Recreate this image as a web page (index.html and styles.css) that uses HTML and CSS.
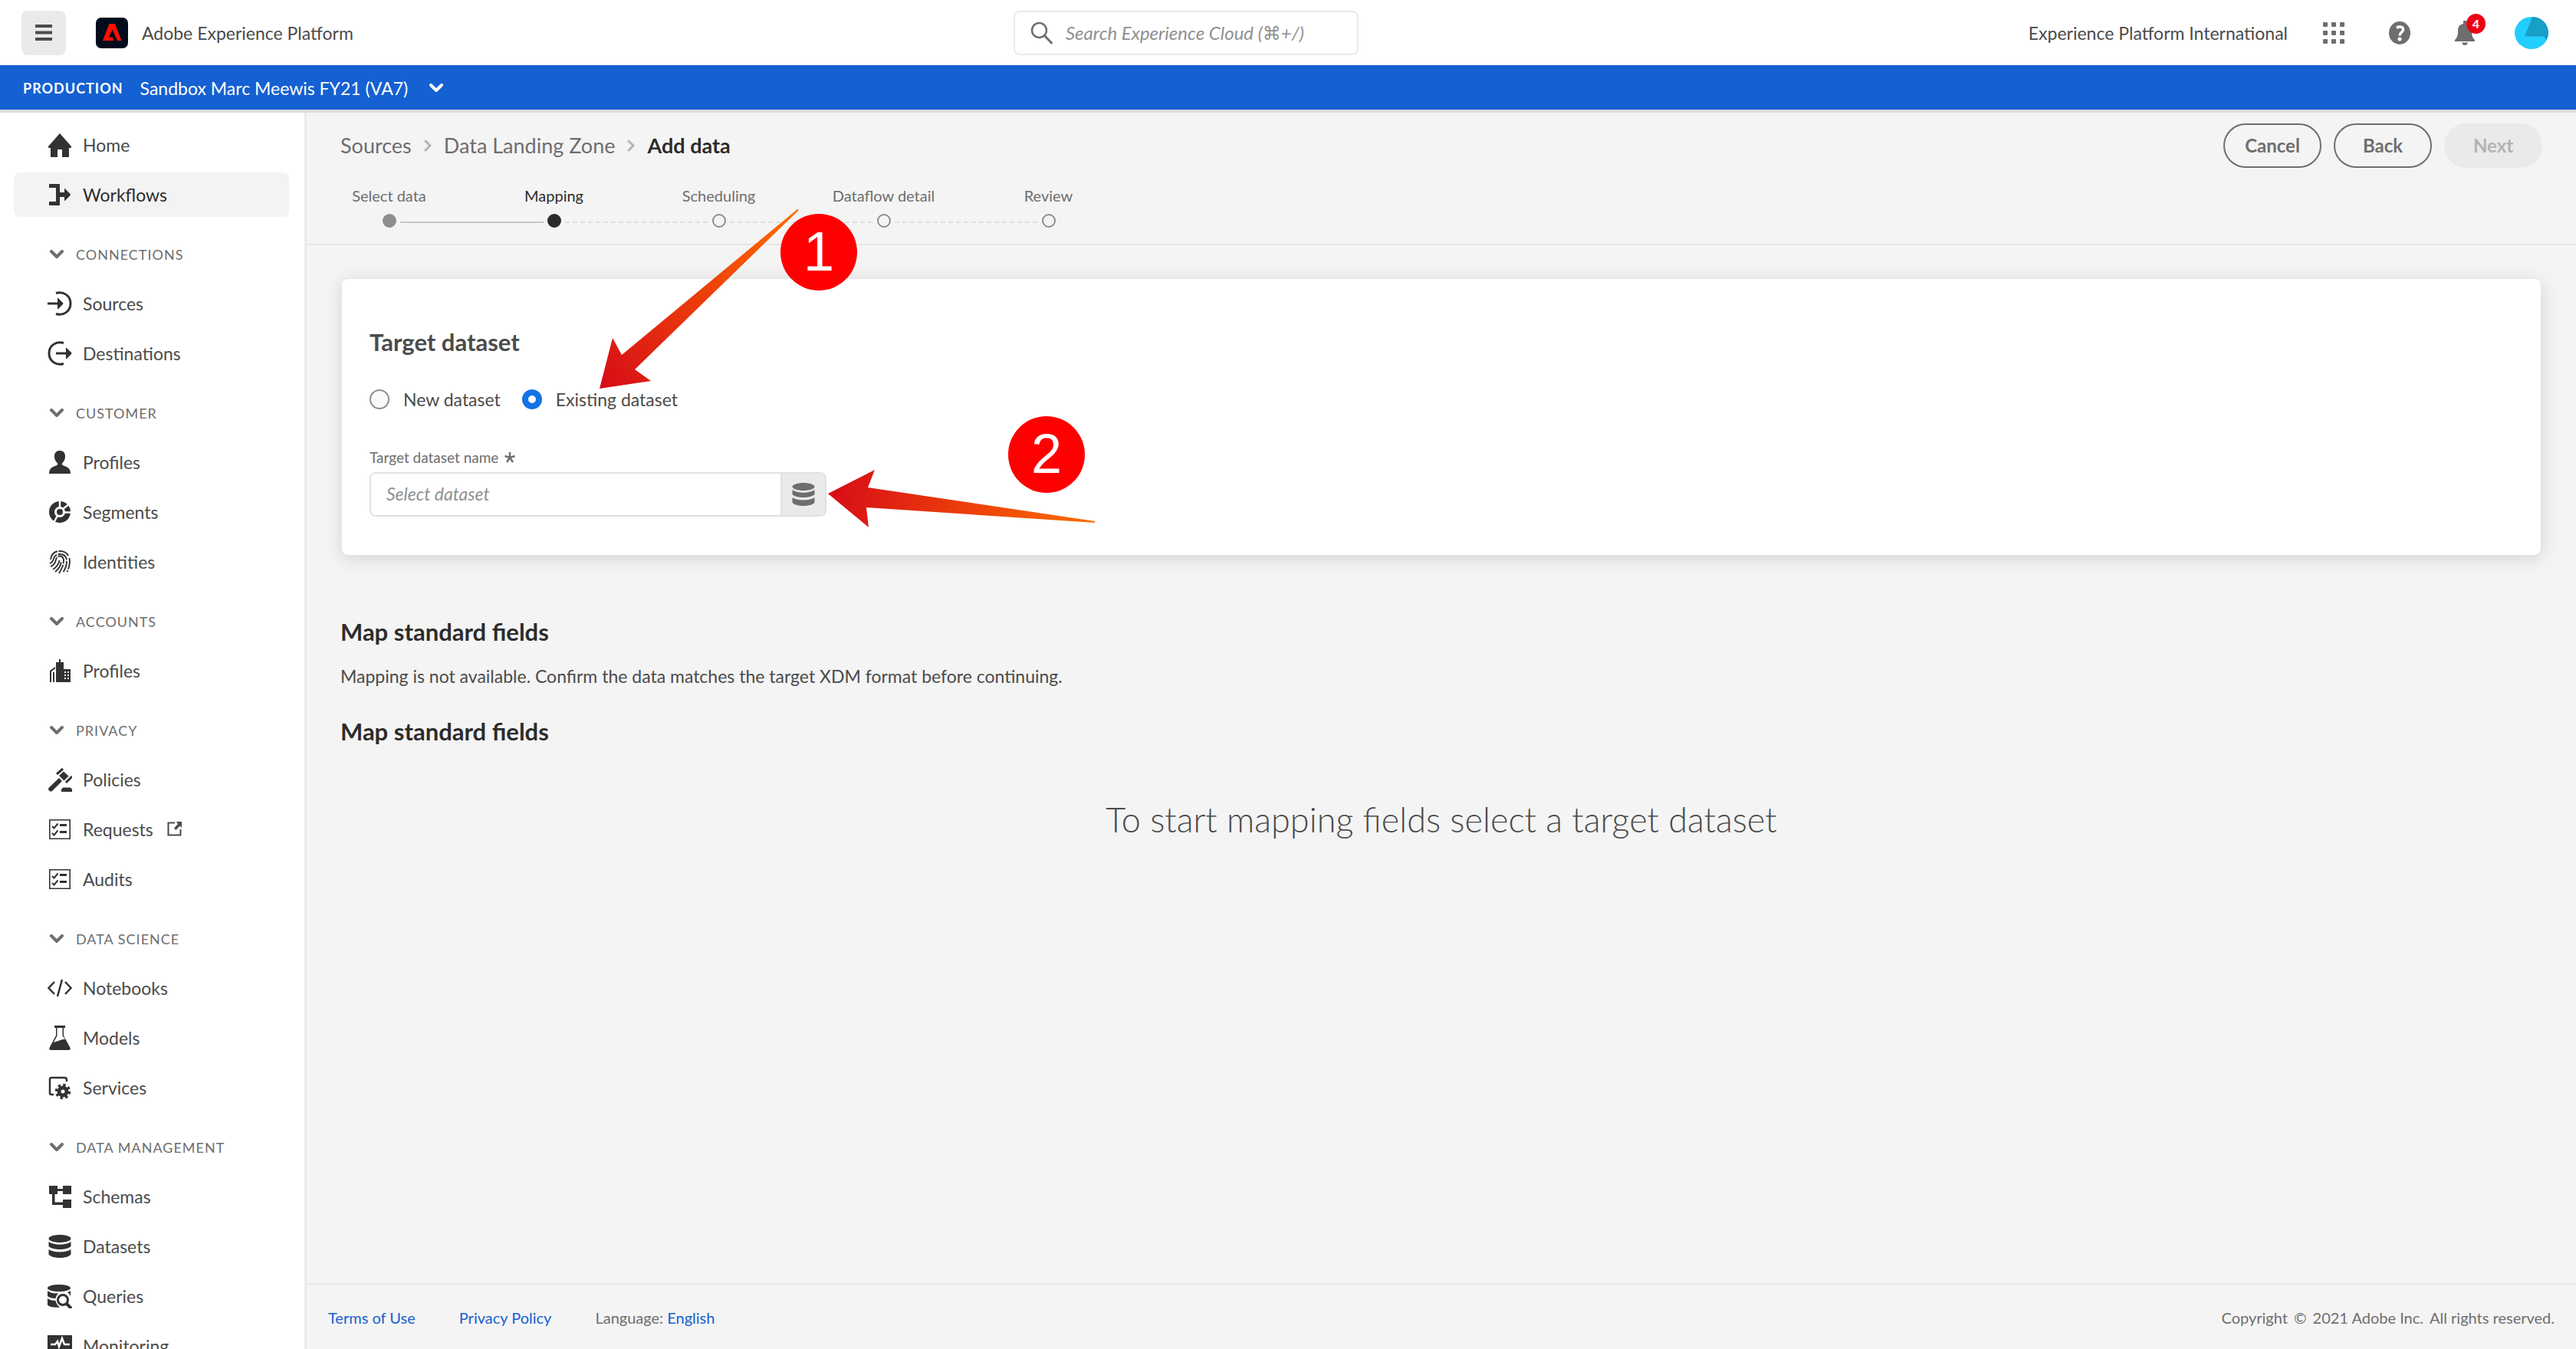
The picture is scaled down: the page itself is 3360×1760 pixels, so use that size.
FILE: index.html
```html
<!DOCTYPE html>
<html lang="en">
<head>
<meta charset="utf-8">
<title>Adobe Experience Platform</title>
<link rel="stylesheet" href="styles.css">
</head>
<body>
<svg class="sprite" aria-hidden="true">
  <symbol id="chevron" viewBox="0 0 18 12"><path d="M2 2l7 7 7-7" fill="none" stroke="currentColor" stroke-width="4" stroke-linecap="round" stroke-linejoin="round"/></symbol>
  <symbol id="chevron-right" viewBox="0 0 10 16"><path d="M2 2l6 6-6 6" fill="none" stroke="currentColor" stroke-width="3" stroke-linecap="round" stroke-linejoin="round"/></symbol>
  <symbol id="home" viewBox="0 0 32 32"><path d="M16 1L1 18c-.6.8-.2 2 1 2h2v12q0 1 1 1h7q1 0 1-1V22h6v10q0 1 1 1h7q1 0 1-1V20h2c1.200 0 1.600-1.200 1-2z" fill="currentColor"/></symbol>
  <symbol id="workflows" viewBox="0 0 32 32"><path d="M2 2h14v11h6V9q0-1.500 1.200-.5L29.500 15q1 1 0 2l-6.300 6.500Q22 24.500 22 23v-4h-6v11H2v-5h9V7H2z" fill="currentColor"/></symbol>
  <symbol id="sources" viewBox="0 0 32 32"><path d="M11 2.500c10-3 19 3.500 19 13.500s-9 16.500-19 13.500" fill="none" stroke="currentColor" stroke-width="3"/><path d="M0 14.500h13V9.500q0-1.500 1-.6L20 15q1 1 0 2l-6 6q-1 1-1-.5v-5H0z" fill="currentColor"/></symbol>
  <symbol id="destinations" viewBox="0 0 32 32"><path d="M21 2.500C11-.5 2 6 2 16s9 16.500 19 13.500" fill="none" stroke="currentColor" stroke-width="3"/><path d="M11 14.500h13V9.500q0-1.500 1-.6L31 15q1 1 0 2l-6 6q-1 1-1-.5v-5H11z" fill="currentColor"/></symbol>
  <symbol id="user" viewBox="0 0 32 32"><path d="M2 31c0-6 3-8.500 9-10.500q3-1 2-3c-3-3-4-6-4-9C9 3.500 11.500 1 16 1s7 2.500 7 7.500c0 3-1 6-4 9q-1 2 2 3c6 2 9 4.500 9 10.500z" fill="currentColor"/></symbol>
  <symbol id="segments" viewBox="0 0 32 32"><circle cx="16" cy="16" r="10.500" fill="none" stroke="currentColor" stroke-width="7"/><circle cx="16" cy="16" r="4" fill="currentColor"/><path d="M16 10V0M20 12l9-7M21 16.500h11M13.500 20L8 30" stroke="#fff" stroke-width="2.400"/></symbol>
  <symbol id="fingerprint" viewBox="0 0 32 32"><path d="M4 13C5 5 10 2 16 2c5 0 9 2 11 6M28.500 11c1 6 0 12-3 18M3 18c3-1 4-3 5-6 1-4 4-6 8-6 6 0 9 4 9 9 0 6-2 11-5 15M4 22c5-2 6-5 7-9 1-6 10-6 10 1 0 7-3 12-6 17M7 26c5-3 8-8 9-13M10 29c4-3 7-8 8-13" fill="none" stroke="currentColor" stroke-width="1.900" stroke-dasharray="15 1.500"/></symbol>
  <symbol id="building" viewBox="0 0 32 32"><path d="M15 1h2v4h4v9h9v17H11V5h4zM3 31V16l7-5v2.500L5 17v14zm4 0V18h2v13z" fill="currentColor"/><path d="M22 17h2v2h-2zm4 0h2v2h-2zm-4 4h2v2h-2zm4 0h2v2h-2zm-4 4h2v2h-2zm4 0h2v2h-2z" fill="#fff"/></symbol>
  <symbol id="gavel" viewBox="0 0 32 32"><path d="M12 9l8-7M24 20l8-8" stroke="currentColor" stroke-width="3"/><path d="M15 11l6-5.500 6.500 6-6 6zM15 14l4 4L6 31q-2 1.500-4-.5t0-4zM18 32v-3l2-2.500h10l2 2.500v3z" fill="currentColor"/></symbol>
  <symbol id="checklist" viewBox="0 0 32 32"><path d="M2.800 3.800h26.400v24.400H2.800z" fill="none" stroke="currentColor" stroke-width="1.600"/><path d="M6 12l2.500 2.500 5-6M6 21l2.500 2.500 5-6" fill="none" stroke="currentColor" stroke-width="2"/><path d="M16 9h9v3h-9zm0 9h9v3h-9z" fill="currentColor"/></symbol>
  <symbol id="code" viewBox="0 0 32 32"><path d="M9 8l-7.500 8L9 24M23 8l7.500 8-7.500 8M19 5l-6 22" fill="none" stroke="currentColor" stroke-width="2.500"/></symbol>
  <symbol id="flask" viewBox="0 0 32 32"><path d="M9 0h14v3h-2v10l8.500 16q1 3-2 3h-23q-3 0-2-3L11 13V3H9zm3.500 3v10.500L8 22l12-4q3 0 3-.5l-3.500-4V3z" fill="currentColor" fill-rule="evenodd"/></symbol>
  <symbol id="services" viewBox="0 0 32 32"><path d="M8 25H5q-2 0-2-2V5q0-2 2-2h17q3 0 3 3v2" fill="none" stroke="currentColor" stroke-width="2.500"/><circle cx="20" cy="21" r="5" fill="none" stroke="currentColor" stroke-width="5"/><circle cx="20" cy="21" r="8.500" fill="none" stroke="currentColor" stroke-width="3.500" stroke-dasharray="3.340 3.340"/></symbol>
  <symbol id="schemas" viewBox="0 0 32 32"><path d="M2 2h11v4h7V2h11v11H20V9h-7v4H9.500v10.500H20V20h11v11H20v-4H6V13H2z" fill="currentColor"/></symbol>
  <symbol id="database" viewBox="0 0 32 32"><path d="M30.500 6c0 2.800-6.500 5-14.500 5S1.500 8.800 1.500 6 8 1 16 1s14.500 2.200 14.500 5zM1.500 10c7 5 22 5 29 0v6c-5 5.300-24 5.300-29 0zm0 10c6 4.500 23 4.500 29 0v6.500c-4 6-25 6-29 0z" fill="currentColor"/></symbol>
  <symbol id="queries" viewBox="0 0 32 32"><path d="M30 5.500c0 2.600-6.500 4.500-15 4.500S0 8.100 0 5.500 6.500 1 15 1s15 1.900 15 4.500zM0 9q5 4 14 3.500-3 3-3.500 6.500Q3 19 0 16zM0 19q4 3 10.500 3 1 5 5.500 8.500-12 1-16-3zM26 11q3-1 4-2v7q-1-3-4-5z" fill="currentColor"/><circle cx="20" cy="21" r="6.500" fill="none" stroke="currentColor" stroke-width="3"/><path d="M25 26l6 6" stroke="currentColor" stroke-width="4"/></symbol>
  <symbol id="monitoring" viewBox="0 0 32 32"><path d="M0 2h32v22H0z" fill="currentColor"/><path d="M4 14h6l3-4 2 7 4-11 3 8h7" fill="none" stroke="#fff" stroke-width="2.500"/></symbol>
</svg>

<header class="topbar">
  <div class="brand">
    <button class="menu-button" type="button" aria-label="Toggle navigation">
      <svg width="22" height="22" viewBox="0 0 22 22"><path d="M0 0h22v4H0zm0 8.500h22v4H0zM0 17h22v4H0z" fill="#4b4b4b"/></svg>
    </button>
    <svg class="logo" viewBox="0 0 42 40" aria-hidden="true"><rect width="42" height="40" rx="7" fill="#000b1d"/><path d="M17.500 8H25l8.500 22H28L21.700 15.500 17.200 25.600h4.300l2 4.400H9z" fill="#fa0f00"/></svg>
    <span class="brand-name">Adobe Experience Platform</span>
  </div>
  <div class="search">
    <svg width="30" height="30" viewBox="0 0 30 30" aria-hidden="true"><circle cx="11.500" cy="11.500" r="9.500" fill="none" stroke="#6e6e6e" stroke-width="2.500"/><path d="M18.500 18.500l9 9.500" stroke="#6e6e6e" stroke-width="3" stroke-linecap="round"/></svg>
    <input class="search-input" type="search" aria-label="Search Experience Cloud" placeholder="Search Experience Cloud (⌘+/)">
  </div>
  <div class="tools">
    <span class="org">Experience Platform International</span>
    <button class="tool" type="button" aria-label="Apps">
      <svg width="28" height="28" viewBox="0 0 28 28" fill="#6e6e6e"><rect width="6" height="6" rx="1"/><rect x="11" width="6" height="6" rx="1"/><rect x="22" width="6" height="6" rx="1"/><rect y="11" width="6" height="6" rx="1"/><rect x="11" y="11" width="6" height="6" rx="1"/><rect x="22" y="11" width="6" height="6" rx="1"/><rect y="22" width="6" height="6" rx="1"/><rect x="11" y="22" width="6" height="6" rx="1"/><rect x="22" y="22" width="6" height="6" rx="1"/></svg>
    </button>
    <button class="tool" type="button" aria-label="Help">
      <svg width="28" height="30" viewBox="0 0 28 30"><ellipse cx="14" cy="15" rx="14" ry="15" fill="#6e6e6e"/><path d="M10 8.500c4-3 9-1.500 8.500 2.500-.3 3-4.500 4-4.500 7.500" fill="none" stroke="#fff" stroke-width="3.500"/><circle cx="14" cy="23" r="2.500" fill="#fff"/></svg>
    </button>
    <button class="tool bell" type="button" aria-label="Notifications">
      <svg width="26" height="32" viewBox="0 0 26 32" fill="#6e6e6e"><path d="M11 0h4v4c5 1 7 4 7 9 0 7 1 9 4 12v2H0v-2c3-3 4-5 4-12 0-5 2-8 7-9zM9 28.500h8q-1 3.500-4 3.500t-4-3.500z"/></svg>
      <span class="badge">4</span>
    </button>
    <button class="tool" type="button" aria-label="Account">
      <svg width="44" height="42" viewBox="0 0 44 42"><ellipse cx="22" cy="21" rx="22" ry="21" fill="#22cefe"/><path d="M23 0c12 0 21 9 21 21q0 5-3 10-1-4-3-5.500H13z" fill="#189fc4"/></svg>
    </button>
  </div>
</header>

<div class="sandbox">
  <span class="env">PRODUCTION</span>
  <button class="sandbox-picker" type="button">Sandbox Marc Meewis FY21 (VA7) <svg class="chevron"><use href="#chevron"/></svg></button>
</div>

<div class="workspace">
  <nav class="sidebar" aria-label="Main">
    <ul class="nav-list">
      <li><a class="nav-item" href="#home"><svg class="icon"><use href="#home"/></svg>Home</a></li>
      <li><a class="nav-item current" href="#workflows" aria-current="page"><svg class="icon"><use href="#workflows"/></svg>Workflows</a></li>
    </ul>
    <button class="nav-heading" type="button"><svg class="chevron"><use href="#chevron"/></svg>CONNECTIONS</button>
    <ul class="nav-list">
      <li><a class="nav-item" href="#sources"><svg class="icon"><use href="#sources"/></svg>Sources</a></li>
      <li><a class="nav-item" href="#destinations"><svg class="icon"><use href="#destinations"/></svg>Destinations</a></li>
    </ul>
    <button class="nav-heading" type="button"><svg class="chevron"><use href="#chevron"/></svg>CUSTOMER</button>
    <ul class="nav-list">
      <li><a class="nav-item" href="#user"><svg class="icon"><use href="#user"/></svg>Profiles</a></li>
      <li><a class="nav-item" href="#segments"><svg class="icon"><use href="#segments"/></svg>Segments</a></li>
      <li><a class="nav-item" href="#identities"><svg class="icon"><use href="#fingerprint"/></svg>Identities</a></li>
    </ul>
    <button class="nav-heading" type="button"><svg class="chevron"><use href="#chevron"/></svg>ACCOUNTS</button>
    <ul class="nav-list">
      <li><a class="nav-item" href="#accounts"><svg class="icon"><use href="#building"/></svg>Profiles</a></li>
    </ul>
    <button class="nav-heading" type="button"><svg class="chevron"><use href="#chevron"/></svg>PRIVACY</button>
    <ul class="nav-list">
      <li><a class="nav-item" href="#policies"><svg class="icon"><use href="#gavel"/></svg>Policies</a></li>
      <li><a class="nav-item" href="#requests"><svg class="icon"><use href="#checklist"/></svg>Requests
        <svg class="external" viewBox="0 0 20 20"><path d="M10 1.500H1.500v16h16V10" fill="none" stroke="currentColor" stroke-width="2"/><path d="M12 0h7v8l-2.500-2.500L11.500 11 9 8.500 14 3z" fill="currentColor"/></svg></a></li>
      <li><a class="nav-item" href="#audits"><svg class="icon"><use href="#checklist"/></svg>Audits</a></li>
    </ul>
    <button class="nav-heading" type="button"><svg class="chevron"><use href="#chevron"/></svg>DATA SCIENCE</button>
    <ul class="nav-list">
      <li><a class="nav-item" href="#notebooks"><svg class="icon"><use href="#code"/></svg>Notebooks</a></li>
      <li><a class="nav-item" href="#models"><svg class="icon"><use href="#flask"/></svg>Models</a></li>
      <li><a class="nav-item" href="#services"><svg class="icon"><use href="#services"/></svg>Services</a></li>
    </ul>
    <button class="nav-heading" type="button"><svg class="chevron"><use href="#chevron"/></svg>DATA MANAGEMENT</button>
    <ul class="nav-list">
      <li><a class="nav-item" href="#schemas"><svg class="icon"><use href="#schemas"/></svg>Schemas</a></li>
      <li><a class="nav-item" href="#datasets"><svg class="icon"><use href="#database"/></svg>Datasets</a></li>
      <li><a class="nav-item" href="#queries"><svg class="icon"><use href="#queries"/></svg>Queries</a></li>
      <li><a class="nav-item" href="#monitoring"><svg class="icon"><use href="#monitoring"/></svg>Monitoring</a></li>
    </ul>
  </nav>

  <div class="page">
    <div class="page-header">
      <div class="title-row">
        <nav class="breadcrumbs" aria-label="Breadcrumb">
          <a href="#sources">Sources</a>
          <svg class="separator"><use href="#chevron-right"/></svg>
          <a href="#landing">Data Landing Zone</a>
          <svg class="separator"><use href="#chevron-right"/></svg>
          <span class="crumb-current" aria-current="page">Add data</span>
        </nav>
        <div class="actions">
          <button class="button" type="button">Cancel</button>
          <button class="button" type="button">Back</button>
          <button class="button" type="button" disabled>Next</button>
        </div>
      </div>
      <ol class="steps">
        <li class="step done">Select data</li>
        <li class="step active" aria-current="step">Mapping</li>
        <li class="step">Scheduling</li>
        <li class="step">Dataflow detail</li>
        <li class="step">Review</li>
      </ol>
    </div>

    <main class="content">
      <form class="card">
        <h2 class="card-title">Target dataset</h2>
        <div class="radios">
          <label class="radio"><input type="radio" name="target">New dataset</label>
          <label class="radio"><input type="radio" name="target" checked>Existing dataset</label>
        </div>
        <label class="field-label" for="dataset">Target dataset name
          <svg width="14" height="14" viewBox="0 0 14 14" aria-hidden="true"><path d="M7 7V0M7 7l6.500-2M7 7l4 6M7 7l-4 6M7 7L.5 5" stroke="#6e6e6e" stroke-width="2.500"/></svg>
        </label>
        <div class="picker">
          <input class="picker-input" id="dataset" type="text" placeholder="Select dataset">
          <button class="picker-button" type="button" aria-label="Browse datasets"><svg class="icon"><use href="#database"/></svg></button>
        </div>
      </form>
      <h2 class="section-title">Map standard fields</h2>
      <p class="note">Mapping is not available. Confirm the data matches the target XDM format before continuing.</p>
      <h2 class="section-title">Map standard fields</h2>
      <p class="empty">To start mapping fields select a target dataset</p>
    </main>

    <footer class="footer">
      <div class="footer-links">
        <a href="#terms">Terms of Use</a>
        <a href="#privacy">Privacy Policy</a>
        <span>Language: <a href="#language">English</a></span>
      </div>
      <div class="copyright"><span>Copyright</span><span>©</span><span>2021 Adobe Inc.</span><span>All rights reserved.</span></div>
    </footer>
  </div>
</div>

<svg class="arrows" viewBox="0 0 1440 720" aria-hidden="true">
  <defs>
    <linearGradient id="g1" gradientUnits="userSpaceOnUse" x1="783" y1="507" x2="1040" y2="274"><stop offset="0" stop-color="#d70c17"/><stop offset="1" stop-color="#ff6d00"/></linearGradient>
    <linearGradient id="g2" gradientUnits="userSpaceOnUse" x1="1080" y1="644" x2="1427" y2="681"><stop offset="0" stop-color="#d70c17"/><stop offset="1" stop-color="#ff6d00"/></linearGradient>
  </defs>
  <path d="M782 507l17-66 12 22 229-190 2 1-214 208 21 15z" fill="url(#g1)"/>
  <path d="M1080 644l61-31-9 23 296 44v2l-298-20 3 26z" fill="url(#g2)"/>
</svg>
<span class="callout callout-one">1</span>
<span class="callout callout-two">2</span>
</body>
</html>
```
FILE: styles.css
```css
* {
  box-sizing: border-box;
}

body {
  margin: 0;
  height: 100vh;
  display: flex;
  flex-direction: column;
  overflow: hidden;
  position: relative;
  background: #f4f4f4;
  color: #4b4b4b;
  font: 23px/30px Lato, "DejaVu Sans", sans-serif;
}

button,
input {
  font: inherit;
  color: inherit;
}

button {
  padding: 0;
  border: 0;
  background: none;
}

a {
  color: inherit;
  text-decoration: none;
}

h2,
p,
ul,
ol {
  margin: 0;
  padding: 0;
  list-style: none;
}

svg {
  display: block;
  flex: none;
}

.sprite {
  position: absolute;
  width: 0;
  height: 0;
}

.icon {
  width: 32px;
  height: 32px;
}

.chevron {
  width: 18px;
  height: 12px;
}

/* Top bar */

.topbar {
  display: grid;
  grid-template-columns: 1294fr 450px 1552fr;
  align-items: center;
  flex: none;
  height: 85px;
  padding: 0 36px 0 28px;
  background: #fff;
}

.brand {
  display: flex;
  align-items: center;
}

.menu-button {
  display: grid;
  place-items: center;
  width: 58px;
  height: 58px;
  border-radius: 8px;
  background: #eaeaea;
}

.logo {
  width: 42px;
  height: 40px;
  margin: 0 18px 0 39px;
}

.search {
  display: flex;
  align-items: center;
  gap: 16px;
  height: 58px;
  padding: 0 20px;
  border: 2px solid #eaeaea;
  border-radius: 8px;
}

.search-input {
  flex: 1;
  min-width: 0;
  padding: 0;
  border: 0;
  outline: 0;
  background: none;
  font-size: 24px;
}

.search-input::placeholder,
.picker-input::placeholder {
  color: #909090;
  font-style: italic;
  opacity: 1;
}

.tools {
  display: flex;
  align-items: center;
  justify-content: flex-end;
}

.tool {
  margin-left: 58px;
}

.org {
  margin-right: -12px;
}

.bell {
  position: relative;
}

.bell + .tool {
  margin-left: 52px;
}

.badge {
  position: absolute;
  top: -9px;
  left: 15px;
  width: 25px;
  height: 26px;
  border-radius: 50%;
  background: #eb0014;
  color: #fff;
  font-size: 16px;
  font-weight: 700;
  line-height: 26px;
  text-align: center;
}

.sandbox {
  display: flex;
  align-items: center;
  gap: 22px;
  flex: none;
  height: 62px;
  padding: 2px 30px 0;
  border-bottom: 4px solid #dcdcdc;
  background: #1560d2;
  color: #fff;
}

.env {
  font-size: 18px;
  font-weight: 700;
  letter-spacing: 1px;
}

.sandbox-picker {
  display: flex;
  align-items: center;
  gap: 28px;
}

/* Side navigation */

.workspace {
  display: flex;
  flex: 1;
  min-height: 0;
}

.sidebar {
  flex: none;
  width: 400px;
  padding: 13px 20px 0 18px;
  overflow: hidden;
  border-right: 3px solid #eaeaea;
  background: #fff;
}

.nav-list {
  display: flex;
  flex-direction: column;
  gap: 7px;
}

.nav-item {
  display: flex;
  align-items: center;
  gap: 14px;
  height: 58px;
  padding-left: 44px;
  border-radius: 8px;
}

.nav-item .icon {
  color: #323232;
}

.current {
  background: #f3f3f3;
  color: #2c2c2c;
}

.external {
  width: 20px;
  height: 20px;
  margin-left: 4px;
}

.nav-heading {
  display: flex;
  align-items: center;
  gap: 16px;
  height: 24px;
  margin: 37px 0 23px 47px;
  color: #6e6e6e;
  font-size: 18px;
  letter-spacing: 1px;
}

/* Page header */

.page {
  display: flex;
  flex: 1;
  flex-direction: column;
  min-width: 0;
}

.page-header {
  padding: 14px 44px 21px 0;
  border-bottom: 2px solid #e8e8e8;
}

.title-row {
  display: flex;
  align-items: center;
  justify-content: space-between;
  padding-left: 44px;
}

.breadcrumbs {
  display: flex;
  align-items: center;
  gap: 16px;
  color: #6e6e6e;
  font-size: 27px;
}

.separator {
  width: 10px;
  height: 16px;
  color: #b3b3b3;
}

.crumb-current {
  color: #2c2c2c;
  font-weight: 700;
}

.actions {
  display: flex;
  gap: 16px;
}

.button {
  width: 128px;
  height: 58px;
  border: 2px solid #6e6e6e;
  border-radius: 29px;
  color: #6e6e6e;
  font-size: 24px;
  font-weight: 700;
}

.button:disabled {
  border-color: #eaeaea;
  background: #eaeaea;
  color: #b3b3b3;
}

.steps {
  display: flex;
  margin-top: 24px;
}

.step {
  display: grid;
  justify-items: center;
  gap: 12px;
  position: relative;
  width: 215px;
  color: #6e6e6e;
  font-size: 20px;
  line-height: 24px;
}

.step::before {
  content: "";
  order: 1;
  width: 14px;
  height: 14px;
  border: 2px solid #8e8e8e;
  border-radius: 50%;
}

.step:not(:last-child)::after {
  content: "";
  position: absolute;
  bottom: 6px;
  left: calc(50% + 14px);
  width: calc(100% - 28px);
  height: 2px;
  background: repeating-linear-gradient(90deg, #dedede 0 6px, transparent 6px 10px);
}

.done::before {
  background: #8e8e8e;
}

.step.done::after {
  background: #c6c6c6;
}

.active {
  color: #2c2c2c;
}

.active::before {
  border-color: #2c2c2c;
  background: #2c2c2c;
}

/* Content */

.content {
  flex: 1;
  padding: 44px 44px 0;
}

.card {
  margin: 0 2px;
  padding: 64px 36px 50px;
  border-radius: 8px;
  background: #fff;
  box-shadow: 0 2px 2px #e2e2e2, 0 4px 24px rgba(0, 0, 0, 0.14);
}

.card-title,
.section-title {
  font-size: 31px;
  font-weight: 700;
  line-height: 36px;
}

.radios {
  display: flex;
  gap: 28px;
  margin-top: 42px;
}

.radio {
  display: flex;
  align-items: center;
  gap: 18px;
}

.radio input {
  appearance: none;
  width: 26px;
  height: 26px;
  margin: 0;
  border: 2px solid #8e8e8e;
  border-radius: 50%;
  background: #fafafa;
}

.radio input:checked {
  border: 8px solid #1473e6;
  background: #fff;
}

.field-label {
  display: flex;
  align-items: center;
  gap: 8px;
  margin-top: 49px;
  color: #6e6e6e;
  font-size: 19px;
  line-height: 24px;
}

.picker {
  display: flex;
  width: 596px;
  height: 58px;
  margin-top: 7px;
  overflow: hidden;
  border: 2px solid #e1e1e1;
  border-radius: 8px;
}

.picker-input {
  flex: 1;
  min-width: 0;
  padding: 0 20px 2px;
  border: 0;
  outline: 0;
}

.picker-button {
  display: grid;
  place-items: center;
  width: 58px;
  border-left: 2px solid #e1e1e1;
  background: #eaeaea;
  color: #6e6e6e;
}

.section-title {
  margin-top: 39px;
  color: #2c2c2c;
}

.card + .section-title {
  margin-top: 82px;
}

.note {
  margin-top: 25px;
}

.empty {
  margin-top: 69px;
  font-size: 45px;
  font-weight: 300;
  line-height: 56px;
  text-align: center;
}

.footer {
  display: flex;
  align-items: center;
  justify-content: space-between;
  height: 86px;
  padding: 2px 28px 0;
  border-top: 2px solid #e8e8e8;
  color: #6e6e6e;
  font-size: 20px;
}

.footer-links {
  display: flex;
  gap: 57px;
}

.footer-links a {
  color: #1560d2;
}

.copyright {
  display: flex;
  gap: 8px;
}

/* Annotations drawn over the page */

.arrows {
  position: absolute;
  top: 0;
  left: 0;
  width: 1440px;
  height: 720px;
  pointer-events: none;
}

.callout {
  position: absolute;
  width: 100px;
  height: 100px;
  border-radius: 50%;
  background: #f00;
  color: #fff;
  font: 72px/98px "Liberation Sans", sans-serif;
  text-align: center;
}

.callout-one {
  top: 279px;
  left: 1018px;
}

.callout-two {
  top: 543px;
  left: 1315px;
}
```
